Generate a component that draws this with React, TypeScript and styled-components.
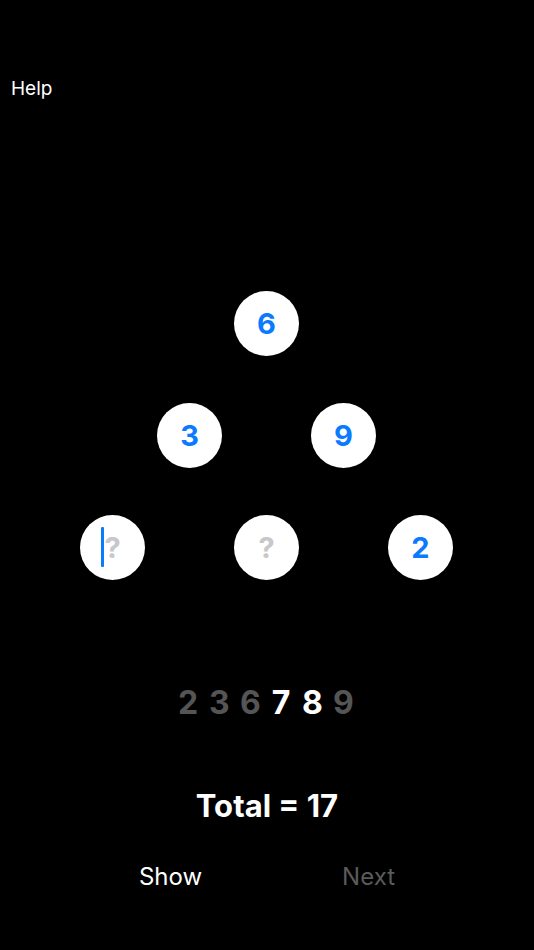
import React from "react";
import styled, { createGlobalStyle } from "styled-components";

const Global = createGlobalStyle`
  html, body { margin: 0; padding: 0; background: #000; }
  body { font-family: Inter, "Noto Sans", "Liberation Sans", sans-serif; }
`;

const Page = styled.div`
  width: 534px;
  height: 950px;
  background: #000;
  display: flex;
  flex-direction: column;
  overflow: hidden;
`;

const HelpButton = styled.div`
  padding: 78px 0 0 11px;
  font-size: 19px;
  line-height: 22px;
  color: #fff;
  font-weight: 400;
`;

const Triangle = styled.div`
  margin-top: 191px;
  display: flex;
  flex-direction: column;
  gap: 47px;
`;

const Row = styled.div`
  display: flex;
  justify-content: center;
  gap: 89px;
  padding-right: 1px;
`;

const Circle = styled.div`
  width: 65px;
  height: 65px;
  border-radius: 50%;
  background: #fff;
  display: flex;
  align-items: center;
  justify-content: center;
  position: relative;
`;

const Num = styled.span<{ $empty?: boolean }>`
  font-size: 29px;
  font-weight: 700;
  color: ${(p) => (p.$empty ? "#c7c7cc" : "#0a7aff")};
  line-height: 1;
`;

const Caret = styled.span`
  position: absolute;
  left: 21px;
  top: 12px;
  width: 3px;
  height: 40px;
  background: #0a7aff;
  border-radius: 1px;
`;

const Digits = styled.div`
  margin-top: 103px;
  display: flex;
  justify-content: center;
  gap: 11px;
  font-size: 32px;
  line-height: 40px;
  font-weight: 700;
  padding-right: 3px;
`;

const Digit = styled.span<{ $on?: boolean }>`
  color: ${(p) => (p.$on ? "#fff" : "#555555")};
  width: 20px;
  text-align: center;
`;

const Total = styled.div`
  margin-top: 65px;
  text-align: center;
  color: #fff;
  font-size: 31px;
  line-height: 36px;
  font-weight: 700;
`;

const Buttons = styled.div`
  margin-top: 38px;
  display: flex;
  justify-content: center;
  gap: 140px;
  font-size: 24px;
  line-height: 30px;
`;

const Btn = styled.span<{ $disabled?: boolean }>`
  color: ${(p) => (p.$disabled ? "#5a5a5a" : "#fff")};
`;

const cell = (v: string, caret = false) => (
  <Circle>
    {caret && <Caret />}
    <Num $empty={v === "?"}>{v}</Num>
  </Circle>
);

export default function App() {
  const digits: [string, boolean][] = [
    ["2", false],
    ["3", false],
    ["6", false],
    ["7", true],
    ["8", true],
    ["9", false],
  ];
  return (
    <Page>
      <Global />
      <HelpButton>Help</HelpButton>
      <Triangle>
        <Row>{cell("6")}</Row>
        <Row>
          {cell("3")}
          {cell("9")}
        </Row>
        <Row>
          {cell("?", true)}
          {cell("?")}
          {cell("2")}
        </Row>
      </Triangle>
      <Digits>
        {digits.map(([d, on], i) => (
          <Digit key={i} $on={on}>
            {d}
          </Digit>
        ))}
      </Digits>
      <Total>Total = 17</Total>
      <Buttons>
        <Btn>Show</Btn>
        <Btn $disabled>Next</Btn>
      </Buttons>
    </Page>
  );
}
